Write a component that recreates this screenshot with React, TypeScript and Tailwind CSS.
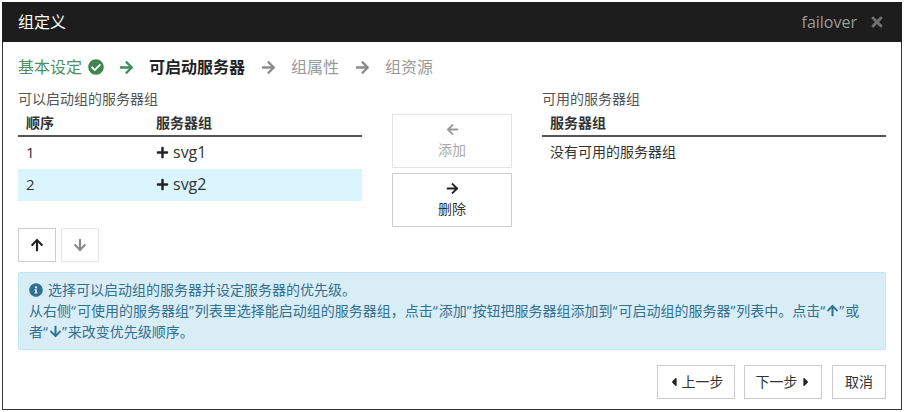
import React from "react";
import { FaArrowLeft, FaArrowRight, FaArrowUp, FaArrowDown, FaPlus, FaCheckCircle, FaInfoCircle, FaTimes, FaCaretLeft, FaCaretRight } from "react-icons/fa";

const font = { fontFamily: '"Open Sans","Noto Sans CJK SC",sans-serif' };

function Th({ className = "", children }: { className?: string; children: React.ReactNode }) {
  return <div className={`font-bold text-[#333] ${className}`}>{children}</div>;
}

function Row({ n, name, active }: { n: string; name: string; active?: boolean }) {
  return (
    <div className={`flex items-center h-[32px] pb-[2px] ${active ? "bg-[#dbf5fe]" : ""}`}>
      <div className="w-[138px] pl-[8px] shrink-0 text-[15px]">{n}</div>
      <div className="flex items-center gap-[4px] text-[#333]">
        <FaPlus className="w-[13px] h-[13px] text-[#222] mt-[1px]" />
        <span className="text-[16px]">{name}</span>
      </div>
    </div>
  );
}

function Q({ children }: { children: React.ReactNode }) {
  return <span className="tracking-[1px]">{children}</span>;
}

export default function App() {
  return (
    <div className="w-[904px] h-[412px] bg-white pt-[2px] pl-[2px] pr-[2px] pb-[1px] overflow-hidden text-[14px] leading-[20px] text-[#333]" style={font}>
      <div className="h-[408px] border-l border-r border-b border-[#333] flex flex-col">
        <div className="h-[40px] bg-[#1d1d1d] flex items-center justify-between -mx-px pl-[16px] pr-[17px] shrink-0">
          <span className="text-[16px] text-white">组定义</span>
          <div className="flex items-center gap-[12px]">
            <span className="text-[16px] text-[#9a9a9a]">failover</span>
            <FaTimes className="w-[16px] h-[16px] text-[#707070]" />
          </div>
        </div>

        <div className="flex-1 pl-[15px] pr-[15px] flex flex-col bg-white">
          <div className="flex items-center h-[24px] mt-[13px] text-[16px]">
            <span className="text-[#4d9160]">基本设定</span>
            <FaCheckCircle className="ml-[6px] w-[16px] h-[16px] text-[#3f8550]" />
            <FaArrowRight className="ml-[15px] w-[15px] h-[15px] text-[#3f8f55]" />
            <span className="ml-[15px] font-bold text-[#222]">可启动服务器</span>
            <FaArrowRight className="ml-[16px] w-[15px] h-[15px] text-[#8a8a8a]" />
            <span className="ml-[15px] text-[#999]">组属性</span>
            <FaArrowRight className="ml-[16px] w-[15px] h-[15px] text-[#8a8a8a]" />
            <span className="ml-[15px] text-[#999]">组资源</span>
          </div>

          <div className="flex mt-[10px]">
            <div className="w-[344px] shrink-0">
              <div className="text-[#555] h-[20px]">可以启动组的服务器组</div>
              <div className="flex items-center h-[27px] border-b-2 border-[#555] mt-px">
                <Th className="w-[138px] pl-[8px] shrink-0">顺序</Th>
                <Th>服务器组</Th>
              </div>
              <Row n="1" name="svg1" />
              <Row n="2" name="svg2" active />
              <div className="flex gap-[5px] mt-[27px]">
                <button className="w-[38px] h-[34px] border border-[#ccc] flex items-center justify-center bg-white">
                  <FaArrowUp className="w-[14px] h-[14px] text-[#222]" />
                </button>
                <button className="w-[38px] h-[34px] border border-[#e5e5e5] flex items-center justify-center bg-white">
                  <FaArrowDown className="w-[14px] h-[14px] text-[#888]" />
                </button>
              </div>
            </div>

            <div className="w-[120px] ml-[30px] shrink-0 pt-[25px] flex flex-col gap-[5px]">
              <button className="h-[54px] border border-[#e5e5e5] flex flex-col items-center justify-center text-[#aaa] bg-white">
                <FaArrowLeft className="w-[13px] h-[13px] text-[#999] mb-[4px]" />
                <span>添加</span>
              </button>
              <button className="h-[54px] border border-[#ccc] flex flex-col items-center justify-center text-[#333] bg-white">
                <FaArrowRight className="w-[13px] h-[13px] text-[#222] mb-[4px]" />
                <span>删除</span>
              </button>
            </div>

            <div className="w-[344px] ml-[30px] shrink-0">
              <div className="text-[#555] h-[20px]">可用的服务器组</div>
              <div className="flex items-center h-[27px] border-b-2 border-[#555] mt-px pl-[8px]">
                <Th>服务器组</Th>
              </div>
              <div className="flex items-center h-[32px] pl-[8px] pb-[2px]">没有可用的服务器组</div>
            </div>
          </div>

          <div className="mt-[10px] h-[78px] border border-[#bce8f1] bg-[#d9edf7] rounded-[2px] pl-[10px] pr-[20px] pt-[6px] text-[#31708f] leading-[21px] w-[868px]">
            <div className="flex items-center">
              <FaInfoCircle className="w-[14px] h-[14px] mr-[5px] text-[#31708f]" />
              <span>选择可以启动组的服务器并设定服务器的优先级。</span>
            </div>
            <div>
              从右侧<Q>“</Q>可使用的服务器组<Q>”</Q>列表里选择能启动组的服务器组，点击<Q>“</Q>添加<Q>”</Q>按钮把服务器组添加到<Q>“</Q>可启动组的服务器<Q>”</Q>列表中。点击<Q>“</Q><FaArrowUp className="inline w-[13px] h-[13px] align-[-1px]" /><Q>”</Q>或者<Q>“</Q><FaArrowDown className="inline w-[13px] h-[13px] align-[-1px]" /><Q>”</Q>来改变优先级顺序。
            </div>
          </div>

          <div className="flex justify-end mt-[15px]">
            <button className="w-[78px] h-[34px] border border-[#ccc] flex items-center justify-center gap-[3px] bg-white">
              <FaCaretLeft className="w-[10px] h-[14px] text-[#222]" />上一步
            </button>
            <button className="w-[78px] h-[34px] ml-[9px] border border-[#ccc] flex items-center justify-center gap-[3px] bg-white">
              下一步<FaCaretRight className="w-[10px] h-[14px] text-[#222]" />
            </button>
            <button className="w-[54px] h-[34px] ml-[10px] border border-[#ccc] flex items-center justify-center bg-white">取消</button>
          </div>
        </div>
      </div>
    </div>
  );
}
